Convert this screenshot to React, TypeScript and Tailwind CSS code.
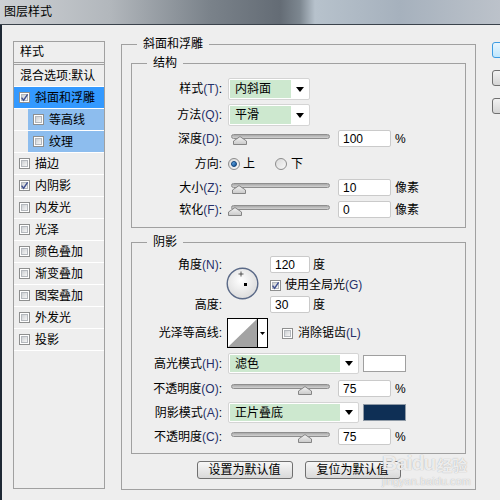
import React from 'react'

const FONT = "font-['Liberation_Sans','Noto_Sans_CJK_SC',sans-serif]"

function Check({ checked }: { checked?: boolean }) {
  return (
    <span className="relative w-[11px] h-[11px] shrink-0 border border-[#8e8f8f] bg-white p-[1px]">
      <span className="block w-full h-full border border-[#b4b8bd] bg-linear-to-br from-[#cdd0d3] to-[#f6f6f6]" />
      {checked && (
        <svg viewBox="0 0 9 9" className="absolute left-[0px] top-[0px] w-[9px] h-[9px]">
          <path d="M1.6 4.6 L3.6 7.2 L7.6 1.4" stroke="#3f5090" strokeWidth="1.4" fill="none" />
        </svg>
      )}
    </span>
  )
}

function Radio({ on }: { on?: boolean }) {
  return (
    <span className="w-[12px] h-[12px] shrink-0 rounded-full border border-[#8c8c8c] bg-linear-to-br from-[#dadada] to-[#f8f8f8] flex items-center justify-center">
      {on && <span className="w-[6px] h-[6px] rounded-full bg-linear-to-br from-[#6fb6ee] to-[#0d4f96] border border-[#0b3f78]" />}
    </span>
  )
}

function Arrow() {
  return (
    <svg width="8" height="5" viewBox="0 0 8 5">
      <polygon points="0,0 8,0 4,5" fill="#000" />
    </svg>
  )
}

function Label({ text, mn }: { text: string; mn?: string }) {
  return (
    <div className="w-[90px] shrink-0 text-right whitespace-nowrap leading-none">
      {text}
      {mn && <span className="text-[#26306a]">({mn})</span>}:
    </div>
  )
}

function Dropdown({ value, wide }: { value: string; wide?: boolean }) {
  return (
    <div className={`flex h-full border border-[#d4d4d4] rounded-[2px] bg-white py-[1px] pl-[1px] ${wide ? 'w-[131px]' : 'w-[82px]'}`}>
      <div className="flex-1 bg-[#cde8cf] pl-[5px] flex items-center leading-none">{value}</div>
      <div className="w-[18px] flex items-center justify-center">
        <Arrow />
      </div>
    </div>
  )
}

function Slider({ left }: { left: number }) {
  return (
    <div className="relative w-[102px] h-[17px] shrink-0">
      <div className="absolute left-[3px] right-0 top-[4px] h-[5px] rounded-full border border-[#8e8e8e] bg-linear-to-b from-[#a9a9a9] to-[#d2d2d2]" />
      <svg width="14" height="9" viewBox="0 0 14 9" className="absolute top-[6px]" style={{ left }}>
        <defs>
          <linearGradient id="thumb" x1="0" y1="0" x2="0" y2="1">
            <stop offset="0" stopColor="#f4f4f4" />
            <stop offset="1" stopColor="#c9c9c9" />
          </linearGradient>
        </defs>
        <polygon points="0.5,8.5 0.5,5 7,0.6 13.5,5 13.5,8.5" fill="url(#thumb)" stroke="#858585" />
      </svg>
    </div>
  )
}

function Field({ value, w }: { value: string; w?: string }) {
  return (
    <div className={`h-[17px] border border-[#cacaca] rounded-[2px] bg-white pl-[4px] flex items-center leading-none ${w ?? 'w-[53px]'}`}>
      {value}
    </div>
  )
}

function SliderRow({ label, mn, value, unit, left, className }: { label: string; mn: string; value: string; unit: string; left: number; className: string }) {
  return (
    <div className={`flex items-center h-[17px] ${className}`}>
      <Label text={label} mn={mn} />
      <div className="ml-[6px] flex items-center">
        <Slider left={left} />
        <div className="ml-[8px]">
          <Field value={value} />
        </div>
        <span className="ml-[4px] leading-none">{unit}</span>
      </div>
    </div>
  )
}

function Dial() {
  return (
    <svg width="33" height="33" viewBox="0 0 33 33">
      <defs>
        <radialGradient id="dial" cx="45%" cy="40%" r="65%">
          <stop offset="0" stopColor="#ffffff" />
          <stop offset="1" stopColor="#d9d9d9" />
        </radialGradient>
      </defs>
      <circle cx="16.5" cy="16.5" r="15.3" fill="url(#dial)" stroke="#5a6987" strokeWidth="1.4" />
      <path d="M15 4.5 V9.5 M12.5 7 H17.5" stroke="#333" strokeWidth="0.8" />
      <rect x="18" y="16" width="3" height="3" fill="#000" />
    </svg>
  )
}

function Contour() {
  return (
    <svg width="41" height="30" viewBox="0 0 41 30">
      <rect x="0.5" y="0.5" width="40" height="29" fill="#fff" stroke="#000" />
      <polygon points="1,29 30,1 30,29" fill="#a3a3a3" />
      <line x1="30.5" y1="1" x2="30.5" y2="29" stroke="#000" />
      <polygon points="33,14 38,14 35.5,17" fill="#000" />
    </svg>
  )
}

const effects = [
  { t: '描边' },
  { t: '内阴影', c: true },
  { t: '内发光' },
  { t: '光泽' },
  { t: '颜色叠加' },
  { t: '渐变叠加' },
  { t: '图案叠加' },
  { t: '外发光' },
  { t: '投影' },
]

function StyleList() {
  return (
    <div className="ml-[11px] mt-[16px] w-[92px] h-[448px] shrink-0 border border-[#a0a0a0]">
      <div className="h-[23px] pl-[6px] flex items-center border-b-[3px] border-double border-[#a0a0a0] leading-none">样式</div>
      <div className="h-[22px] pl-[6px] flex items-center border-b border-white leading-none whitespace-nowrap">混合选项:默认</div>
      <div className="h-[22px] pl-[5px] gap-[5px] flex items-center border-b border-white bg-[#3399ff] leading-none">
        <Check checked />
        斜面和浮雕
      </div>
      {['等高线', '纹理'].map(t => (
        <div key={t} className="h-[22px] border-b border-white">
          <div className="ml-[14px] h-full pl-[5px] gap-[5px] flex items-center bg-[#8dbdee] leading-none">
            <Check />
            {t}
          </div>
        </div>
      ))}
      {effects.map(e => (
        <div key={e.t} className="h-[22px] pl-[5px] gap-[5px] flex items-center border-b border-white leading-none">
          <Check checked={e.c} />
          {e.t}
        </div>
      ))}
    </div>
  )
}

function Structure() {
  return (
    <fieldset className="mt-[3px] border border-[#a0a0a0] pt-[7px] pb-[9px]">
      <legend className="ml-[15px] px-[6px] leading-[16px]">结构</legend>
      <div className="flex items-center h-[22px]">
        <Label text="样式" mn="T" />
        <div className="ml-[6px] h-full">
          <Dropdown value="内斜面" />
        </div>
      </div>
      <div className="flex items-center h-[22px] mt-[4px]">
        <Label text="方法" mn="Q" />
        <div className="ml-[6px] h-full">
          <Dropdown value="平滑" />
        </div>
      </div>
      <SliderRow label="深度" mn="D" value="100" unit="%" left={5} className="mt-[4px]" />
      <div className="flex items-center h-[16px] mt-[9px]">
        <Label text="方向" />
        <div className="ml-[6px] flex items-center leading-none">
          <Radio on />
          <span className="ml-[3px]">上</span>
          <span className="ml-[20px]">
            <Radio />
          </span>
          <span className="ml-[4px]">下</span>
        </div>
      </div>
      <SliderRow label="大小" mn="Z" value="10" unit="像素" left={4} className="mt-[7px]" />
      <SliderRow label="软化" mn="F" value="0" unit="像素" left={0} className="mt-[5px]" />
    </fieldset>
  )
}

function Shading() {
  return (
    <fieldset className="mt-[6px] border border-[#a0a0a0] pt-[6px] pb-[8px]">
      <legend className="ml-[15px] px-[6px] leading-[16px]">阴影</legend>
      <div className="flex h-[57px]">
        <div className="w-[90px] flex flex-col justify-between">
          <div className="h-[17px] flex items-center justify-end">
            <Label text="角度" mn="N" />
          </div>
          <div className="h-[17px] flex items-center justify-end">
            <Label text="高度" />
          </div>
        </div>
        <div className="ml-[4px] mt-[11px]">
          <Dial />
        </div>
        <div className="ml-[11px] flex flex-col">
          <div className="flex items-center h-[17px]">
            <Field value="120" w="w-[40px]" />
            <span className="ml-[3px] leading-none">度</span>
          </div>
          <div className="flex items-center h-[16px] mt-[4px] gap-[4px] leading-none">
            <Check checked />
            <span>
              使用全局光<span className="text-[#26306a]">(G)</span>
            </span>
          </div>
          <div className="flex items-center h-[17px] mt-[3px]">
            <Field value="30" w="w-[40px]" />
            <span className="ml-[3px] leading-none">度</span>
          </div>
        </div>
      </div>
      <div className="flex items-center h-[30px] mt-[5px]">
        <Label text="光泽等高线" />
        <div className="ml-[5px]">
          <Contour />
        </div>
        <div className="ml-[14px] flex items-center gap-[5px] leading-none">
          <Check />
          <span>
            消除锯齿<span className="text-[#26306a]">(L)</span>
          </span>
        </div>
      </div>
      <div className="flex items-center h-[21px] mt-[5px]">
        <Label text="高光模式" mn="H" />
        <div className="ml-[6px] h-full flex items-center">
          <Dropdown value="滤色" wide />
          <div className="ml-[4px] w-[43px] h-[17px] border border-[#9f9f9f] bg-white" />
        </div>
      </div>
      <SliderRow label="不透明度" mn="O" value="75" unit="%" left={70} className="mt-[6px]" />
      <div className="flex items-center h-[21px] mt-[5px]">
        <Label text="阴影模式" mn="A" />
        <div className="ml-[6px] h-full flex items-center">
          <Dropdown value="正片叠底" wide />
          <div className="ml-[4px] w-[43px] h-[17px] border border-[#8f9aa6] bg-[#0e2f55]" />
        </div>
      </div>
      <SliderRow label="不透明度" mn="C" value="75" unit="%" left={70} className="mt-[5px]" />
    </fieldset>
  )
}

function Btn({ children }: { children: React.ReactNode }) {
  return (
    <div className="w-[96px] h-[18px] border border-[#707070] rounded-[3px] bg-linear-to-b from-[#f7f7f7] to-[#d9d9d9] flex items-center justify-center leading-none">
      {children}
    </div>
  )
}

export default function App() {
  return (
    <div className={`relative w-[500px] h-[500px] overflow-hidden bg-[#eeeeee] text-[12px] text-black ${FONT}`}>
      <div className="h-[25px] border-b border-[#3a424b] pl-[4px] flex items-center bg-[linear-gradient(90deg,#cdd0d4_0%,#b2b7bc_22%,#7a828a_42%,#646c75_56%,#7d8790_60%,#b7c2cc_63%,#a6b1bd_80%,#bcc2ca_100%)] leading-none">
        图层样式
      </div>
      <div className="flex h-[475px] border-l-2 border-[#1e2834]">
        <StyleList />
        <fieldset className="ml-[16px] mt-[11px] w-[355px] h-[454px] shrink-0 border border-[#a0a0a0] px-[9px]">
          <legend className="ml-[6px] px-[6px] leading-[16px]">斜面和浮雕</legend>
          <Structure />
          <Shading />
          <div className="mt-[7px] flex justify-center gap-[12px]">
            <Btn>设置为默认值</Btn>
            <Btn>复位为默认值</Btn>
          </div>
        </fieldset>
        <div className="ml-[16px] mt-[17px] flex flex-col gap-[12px]">
          <div className="w-[40px] h-[16px] rounded-[3px] border border-[#3c9be2] bg-linear-to-b from-[#eaf6fd] to-[#bee6fd]" />
          <div className="w-[40px] h-[16px] rounded-[3px] border border-[#707070] bg-linear-to-b from-[#f2f2f2] to-[#d5d5d5]" />
          <div className="w-[40px] h-[16px] rounded-[3px] border border-[#707070] bg-linear-to-b from-[#f2f2f2] to-[#d5d5d5]" />
        </div>
      </div>
      <div className="absolute left-[382px] top-[452px] pointer-events-none text-white/80 [text-shadow:0_0_1px_#9a9a9a] leading-none">
        <div className="flex items-end">
          <span className="text-[21px] font-bold tracking-[-1px]">Baidu</span>
          <span className="ml-[2px] text-[15px] font-bold">经验</span>
        </div>
        <div className="mt-[3px] text-[11px]">jingyan.baidu.com</div>
      </div>
    </div>
  )
}
